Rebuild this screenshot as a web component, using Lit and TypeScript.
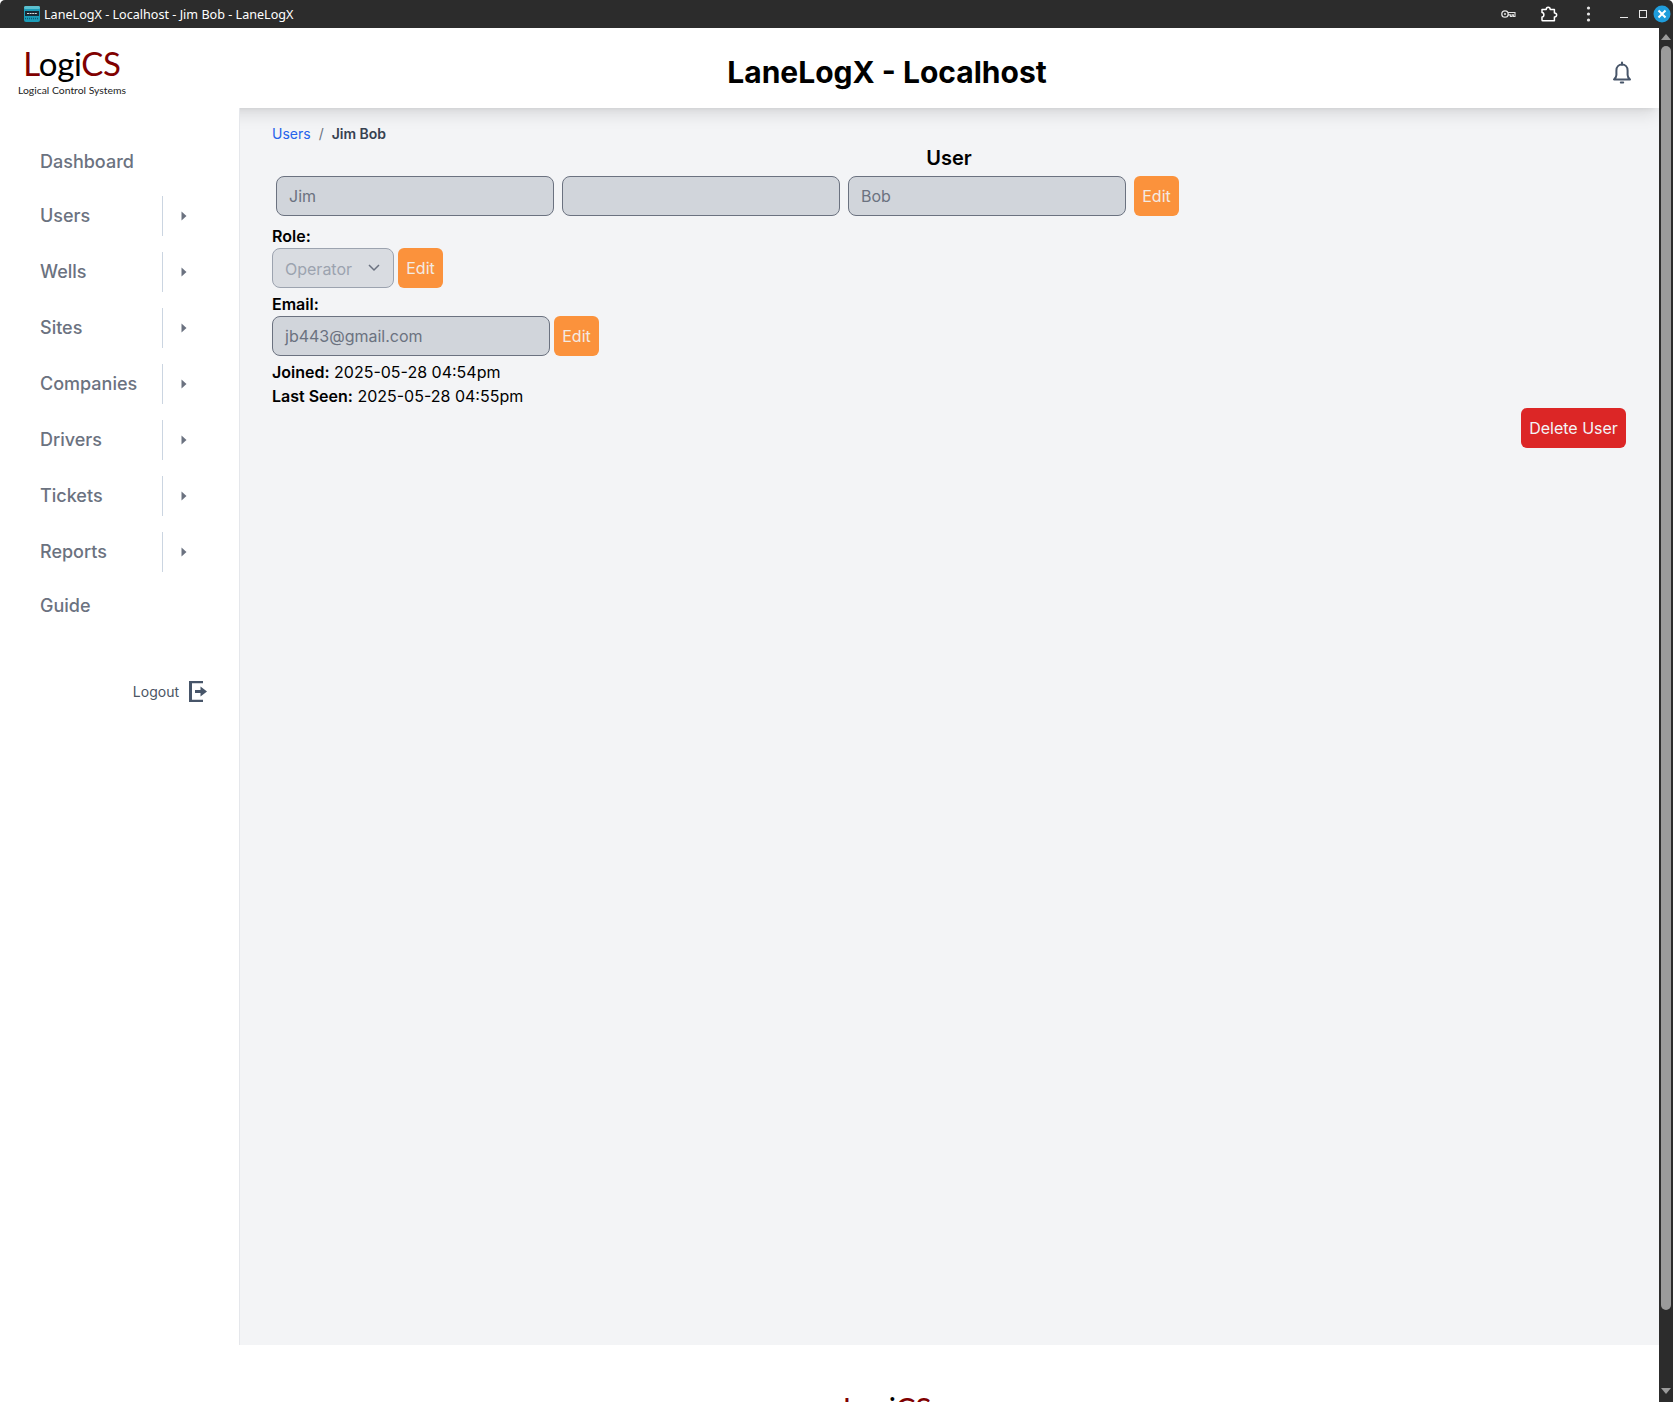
import { LitElement, html, css } from "lit";
import { customElement } from "lit/decorators.js";

const arrow = html`<svg class="arrow" viewBox="0 0 6 10" width="6" height="10"><path d="M0.500 0.500 L5.500 5 L0.500 9.500Z" fill="#6b7280"/></svg>`;

@customElement("app-root")
export class AppRoot extends LitElement {
  static styles = css`
    :host { display: block; height: 1402px; overflow: hidden; font-family: Inter, "Liberation Sans", sans-serif; color: #000; background: #fff; }
    * { box-sizing: border-box; }
    .titlebar { height: 28px; background: #2c2c2c; display: flex; align-items: center; color: #fff; font: 12.6px "Noto Sans", sans-serif; padding-left: 24px; border-radius: 5px 5px 0 0; }
    .fav { width: 16px; height: 16px; margin-right: 4px; flex: none; }
    .wtitle { flex: 1; white-space: nowrap; }
    .wc { display: flex; align-items: center; height: 28px; }
    .body { flex: 1; display: flex; height: 1374px; }
    .page { width: 1659px; height: 1374px; overflow: hidden; display: flex; flex-direction: column; flex: none; }
    .scroll { width: 14px; background: #2c2c2c; display: flex; flex-direction: column; align-items: center; padding-top: 6px; }
    .thumb { width: 10px; height: 1264px; background: #9b9b9b; border-radius: 5px; margin-top: 6px; }
    .scroll svg { flex: none; }
    .scroll .down { margin-top: 78px; }
    header { height: 80px; flex: none; display: flex; align-items: center; padding-top: 8px; background: #fff; box-shadow: 0 10px 15px -3px rgba(0,0,0,.1), 0 4px 6px -4px rgba(0,0,0,.1); position: relative; z-index: 2; }
    .hlogo { width: 240px; flex: none; padding-left: 18px; }
    .logo { display: inline-flex; flex-direction: column; align-items: center; font-family: Lato, sans-serif; width: 108px; }
    .logo .big { font-size: 33px; line-height: 36px; letter-spacing: -.3px; color: #000; font-weight: 400; margin: -3px 0 3px; }
    .logo .big b { font-weight: 400; color: #800000; }
    .logo .small { font-size: 10.4px; line-height: 12px; color: #222; white-space: nowrap; }
    .title { flex: 1; margin: 0; text-align: center; font-size: 30px; line-height: 36px; font-weight: 700; }
    .hright { width: 125px; flex: none; display: flex; justify-content: flex-end; padding-right: 26px; }
    .mid { flex: 1; display: flex; min-height: 0; }
    aside { width: 240px; flex: none; background: #fff; border-right: 1px solid #e5e7eb; padding-top: 28px; position: relative; z-index: 3; }
    .link { height: 52px; display: flex; align-items: center; padding-left: 40px; font-size: 18px; font-weight: 500; color: #6b7280; padding-bottom: 1px; }
    .guide { height: 50px; padding-bottom: 0; }
    .drop { height: 56px; display: flex; align-items: center; padding-left: 40px; font-size: 18px; font-weight: 500; color: #6b7280; }
    .drop span { width: 122px; margin-top: -1px; }
    .drop i { display: block; width: 1px; height: 40px; background: #cbd5e1; }
    .arrow { margin-left: 18px; }
    .logout { display: flex; align-items: center; justify-content: flex-end; gap: 10px; margin-top: 44px; padding-right: 32px; height: 34px; font-size: 14px; color: #4b5563; }
    main { flex: 1; background: #f3f4f6; padding: 15px 33px 0 32px; }
    .crumbs { display: flex; gap: 8px; font-size: 14px; line-height: 22px; }
    .crumbs a { color: #2563eb; }
    .crumbs em { font-style: normal; color: #6b7280; }
    .crumbs b { font-weight: 600; color: #374151; }
    h2 { margin: 0; text-align: center; font-size: 20px; line-height: 28px; font-weight: 600; height: 28px; margin-top: -1px; }
    .names { display: flex; gap: 8px; padding: 4px 0 0 4px; }
    .field { width: 278px; height: 40px; background: #d1d5db; border: 1px solid #6b7280; border-radius: 8px; padding: 0 12px; font: 16px Inter, sans-serif; color: #6b7280; display: flex; align-items: center; }
    .edit { width: 45px; height: 40px; background: #fb923c; color: #f3ebe4; border: 0; border-radius: 6px; font: 16px Inter, sans-serif; padding: 0; display: flex; align-items: center; justify-content: center; }
    .lbl { font-size: 16px; font-weight: 600; line-height: 24px; }
    .row { display: flex; gap: 4px; }
    .role { margin-top: 8px; }
    .email { margin-top: 4px; }
    .select { width: 122px; height: 40px; background: #d9dce1; border: 1px solid #9ca3af; border-radius: 8px; padding: 1px 12px 0; font-size: 16px; color: #9ca3af; display: flex; align-items: center; justify-content: space-between; }
    .select svg { margin-top: -1px; }
    .line { font-size: 16px; line-height: 24px; }
    .line b { font-weight: 600; }
    .first { margin-top: 4px; }
    .actions { display: flex; justify-content: flex-end; margin-top: 0; }
    .delete { width: 105px; height: 40px; background: #dc2626; color: #f3f4f6; border-radius: 6px; font-size: 16px; display: flex; align-items: center; justify-content: center; }
    footer { height: 57px; flex: none; background: #fff; display: flex; padding-top: 48px; overflow: hidden; }
    footer .logo .big { font-size: 30px; }
    .fleft { width: 240px; flex: none; }
    .fcenter { flex: 1; display: flex; justify-content: center; }
    .fright { width: 125px; flex: none; }
  `;

  logo() {
    return html`<div class="logo"><div class="big"><b>L</b>ogi<b>CS</b></div><div class="small">Logical Control Systems</div></div>`;
  }

  render() {
    const drops = ["Users", "Wells", "Sites", "Companies", "Drivers", "Tickets", "Reports"];
    return html`
      <div class="titlebar">
        <svg class="fav" viewBox="0 0 16 16">
          <rect width="16" height="16" rx="2" fill="#1b9cb8"/>
          <rect x="0" y="0" width="16" height="3" rx="1.500" fill="#5cc0cf"/>
          <rect x="1" y="5" width="14" height="5" fill="#1b2b35"/>
          <path d="M3 7.500h10" stroke="#d5dde0" stroke-width="1.200" stroke-dasharray="2 .6"/>
          <path d="M1 12.500h14" stroke="#0b5f78" stroke-width="1.500" stroke-dasharray="1 1"/>
        </svg>
        <div class="wtitle">LaneLogX - Localhost - Jim Bob - LaneLogX</div>
        <div class="wc">
          <svg width="173" height="28" viewBox="1500 0 173 28" fill="none">
            <circle cx="1505" cy="14" r="3.200" stroke="#e4e4e4" stroke-width="1.300"/>
            <circle cx="1505" cy="14" r="1" fill="#e4e4e4"/>
            <path d="M1508 12.500h7v4h-1.600v-1.600h-1.400v1.600h-1.600v-1.600h-2.400" stroke="#e4e4e4" stroke-width="1.100"/>
            <path d="M1542 9.500h4.200c0-3 4-3 4 0h4.200v3.600c3-.2 3 4 0 3.800v3.900h-11.600c-.4 0-.8-.4-.8-.8v-3c2.500 0 2.500-4.600 0-4.600z" stroke="#fff" stroke-width="1.500" stroke-linejoin="round"/>
            <circle cx="1588.500" cy="8" r="1.600" fill="#e8e8e8"/><circle cx="1588.500" cy="14" r="1.600" fill="#e8e8e8"/><circle cx="1588.500" cy="20" r="1.600" fill="#e8e8e8"/>
            <path d="M1620 17.500h8" stroke="#e8e8e8" stroke-width="1"/>
            <rect x="1639.500" y="10.500" width="7" height="7" stroke="#e8e8e8" stroke-width="1"/>
            <circle cx="1662" cy="14" r="8.500" fill="#1f9ddc"/>
            <path d="M1658.500 10.500l7 7M1665.500 10.500l-7 7" stroke="#fff" stroke-width="2"/>
          </svg>
        </div>
      </div>
      <div class="body">
        <div class="page">
          <header>
            <div class="hlogo">${this.logo()}</div>
            <h1 class="title">LaneLogX - Localhost</h1>
            <div class="hright">
              <svg width="22" height="24" viewBox="0 -1 22 24" fill="none" stroke="#475569" stroke-width="2">
                <path d="M11 3.600c-3.200 0-5.600 2.500-5.600 5.800v4.600c0 1.800-1.200 3.300-2.400 4.400h16c-1.200-1.100-2.400-2.600-2.400-4.400V9.400c0-3.300-2.400-5.800-5.600-5.800z" stroke-linejoin="round"/>
                <path d="M11 1.600v2.200M9.800 21.500h2.400" stroke-linecap="round"/>
              </svg>
            </div>
          </header>
          <div class="mid">
            <aside>
              <div class="link">Dashboard</div>
              ${drops.map((d) => html`<div class="drop"><span>${d}</span><i></i>${arrow}</div>`)}
              <div class="link guide">Guide</div>
              <div class="logout">Logout
                <svg width="18" height="21" viewBox="0 0 18 21" fill="#475569" stroke="none">
                  <path d="M0 0h14v2.200H3v16.600h11V21H0z"/>
                  <path d="M6 9h5.500V5.500L18 10.500l-6.500 5V12H6z"/>
                </svg>
              </div>
            </aside>
            <main>
              <div class="crumbs"><a>Users</a><em>/</em><b>Jim Bob</b></div>
              <h2>User</h2>
              <div class="names">
                <div class="field">Jim</div>
                <div class="field"></div>
                <div class="field">Bob</div>
                <div class="edit">Edit</div>
              </div>
              <div class="lbl role">Role:</div>
              <div class="row">
                <div class="select">Operator
                  <svg width="14" height="14" viewBox="0 0 14 14" fill="none" stroke="#6b7280" stroke-width="1.500"><path d="M2 4l5 5 5-5"/></svg>
                </div>
                <div class="edit">Edit</div>
              </div>
              <div class="lbl email">Email:</div>
              <div class="row">
                <div class="field">jb443@gmail.com</div>
                <div class="edit">Edit</div>
              </div>
              <div class="line first"><b>Joined:</b> 2025-05-28 04:54pm</div>
              <div class="line"><b>Last Seen:</b> 2025-05-28 04:55pm</div>
              <div class="actions"><div class="delete">Delete User</div></div>
            </main>
          </div>
          <footer><div class="fleft"></div><div class="fcenter">${this.logo()}</div><div class="fright"></div></footer>
        </div>
        <div class="scroll">
          <svg width="10" height="6" viewBox="0 0 10 6"><path d="M5 0l5 6H0z" fill="#9b9b9b"/></svg>
          <div class="thumb"></div>
          <svg class="down" width="10" height="6" viewBox="0 0 10 6"><path d="M5 6l5-6H0z" fill="#9b9b9b"/></svg>
        </div>
      </div>
    `;
  }
}
